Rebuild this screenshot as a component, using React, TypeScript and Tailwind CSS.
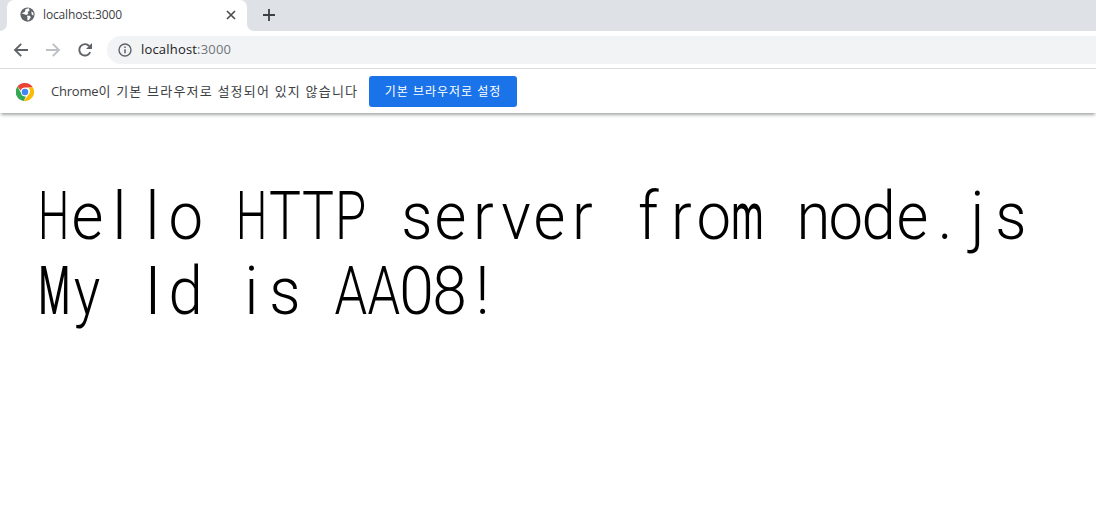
import React from "react";

const ui = "font-['Open_Sans','Noto_Sans_CJK_KR',sans-serif]";

function Globe() {
  return (
    <svg width="15" height="15" viewBox="0 0 16 16" aria-hidden="true">
      <circle cx="8" cy="8" r="7.6" fill="#5f6368" />
      <path d="M1.6 6.6 5 5.2 6 2.2 9.6 1.4 10.2 3.6 8 5.6 9 7 7 8.4 4.6 7.6Z M7.4 9.4 10.4 9.4 11.6 11 9.4 14 7.8 14 8 11.4Z M12 4.6 14.2 6 14.4 9 12.6 8.2Z" fill="#ffffff" />
    </svg>
  );
}

function ChromeLogo() {
  return (
    <svg width="18" height="18" viewBox="0 0 48 48" aria-hidden="true">
      <path d="M4 9.5A24 24 0 0 1 24 0a24 24 0 0 1 21 12H24a12 12 0 0 0-11.4 8.2Z" fill="#ea4335" />
      <path d="M4 9.5 14 27a12 12 0 0 0 12.5 8.8L20.5 47.7A24 24 0 0 1 4 9.5Z" fill="#34a853" />
      <path d="M45 12a24 24 0 0 1-24.5 35.7L34.4 30A12 12 0 0 0 32.5 12Z" fill="#fbbc04" />
      <circle cx="24" cy="24" r="11" fill="#ffffff" />
      <circle cx="24" cy="24" r="8.6" fill="#4285f4" />
    </svg>
  );
}

function Back({ color }: { color: string }) {
  return (
    <svg width="16" height="16" viewBox="0 0 16 16" fill="none" stroke={color} strokeWidth="1.9" aria-hidden="true">
      <path d="M15 8H2M8.2 1.8 2 8l6.2 6.2" />
    </svg>
  );
}

function Forward({ color }: { color: string }) {
  return (
    <svg width="16" height="16" viewBox="0 0 16 16" fill="none" stroke={color} strokeWidth="1.9" aria-hidden="true">
      <path d="M1 8h13M7.8 1.8 14 8l-6.2 6.2" />
    </svg>
  );
}

function Reload() {
  return (
    <svg width="16" height="16" viewBox="0 0 16 16" fill="none" aria-hidden="true">
      <path d="M13.2 10.2A5.7 5.7 0 1 1 12.2 4" stroke="#5f6368" strokeWidth="1.9" />
      <path d="M15 1v6H9Z" fill="#5f6368" />
    </svg>
  );
}

function Info() {
  return (
    <svg width="14" height="14" viewBox="0 0 14 14" fill="none" aria-hidden="true">
      <circle cx="7" cy="7" r="6" stroke="#5f6368" strokeWidth="1.4" />
      <path d="M7 6.2v4M7 3.4v1.6" stroke="#5f6368" strokeWidth="1.5" />
    </svg>
  );
}

function Close() {
  return (
    <svg width="10" height="10" viewBox="0 0 10 10" fill="none" stroke="#4a4d51" strokeWidth="1.7" aria-hidden="true">
      <path d="M1 1l8 8M9 1 1 9" />
    </svg>
  );
}

function Plus() {
  return (
    <svg width="12" height="12" viewBox="0 0 12 12" fill="none" stroke="#3c4043" strokeWidth="1.8" aria-hidden="true">
      <path d="M6 0v12M0 6h12" />
    </svg>
  );
}

const glyphClass: Record<string, string> = {
  H: "scale-x-[0.66] font-[350]",
  M: "scale-x-[0.55] font-normal",
  T: "scale-x-[0.8] font-light",
  P: "scale-x-[0.76] font-light",
  A: "scale-x-[0.78] font-light",
  I: "font-light",
  "0": "scale-x-[0.93] font-light",
  "8": "scale-x-[0.93] font-light",
  y: "scale-x-[0.83] font-light",
  m: "scale-x-[0.55] font-normal",
};

function MonoLine({ text }: { text: string }) {
  return (
    <div className="flex h-[75px]">
      {text.split("").map((c, i) => (
        <span key={i} className="flex w-[33px] shrink-0 justify-center whitespace-pre">
          <span className={`inline-block ${glyphClass[c] ?? "scale-x-[0.92] font-light"}`}>{c}</span>
        </span>
      ))}
    </div>
  );
}

export default function App() {
  return (
    <div className={`flex h-[508px] w-[1096px] flex-col overflow-hidden bg-white ${ui}`}>
      <div className="flex h-[31px] shrink-0 bg-white">
        <div className="w-[7px] rounded-br-[7px] bg-[#dee1e6]" />
        <div className="w-[240px] bg-[#dee1e6]">
          <div className="flex h-full items-center rounded-t-[7px] bg-white pb-[2px] pl-[13px] pr-[11px]">
            <Globe />
            <span className="ml-[8px] flex-1 text-[12px] tracking-[-0.14px] text-[#3c4043]">localhost:3000</span>
            <Close />
          </div>
        </div>
        <div className="flex flex-1 items-center rounded-bl-[7px] bg-[#dee1e6] pb-[2px] pl-[16px]">
          <Plus />
        </div>
      </div>
      <div className="flex h-[37px] shrink-0 items-center bg-white pl-[13px]">
        <Back color="#5f6368" />
        <div className="ml-[16px]"><Forward color="#bdc1c6" /></div>
        <div className="ml-[16px]"><Reload /></div>
        <div className="ml-[14px] flex h-[28px] flex-1 items-center rounded-l-full bg-[#f1f3f4] pl-[11px]">
          <Info />
          <span className="ml-[9px] text-[13px] tracking-[0.18px] text-[#202124]">
            localhost<span className="text-[#70757a]">:3000</span>
          </span>
        </div>
      </div>
      <div className="flex h-[45px] shrink-0 items-center border-t border-[#dadce0] bg-white pl-[16px] pt-[1px] shadow-[0_3px_3px_-1px_rgba(60,64,67,0.45)]">
        <ChromeLogo />
        <span className="ml-[17px] w-[318px] text-[13px] text-[#3c4043]">
          <span className="tracking-[-0.2px]">Chrome</span>
          <span className="tracking-[1.2px]">이 기본 브라우저로 설정되어 있지 않습니다</span>
        </span>
        <button className="flex h-[31px] w-[148px] items-center justify-center rounded-[3px] bg-[#1a73e8] text-[12px] tracking-[1px] text-white">
          기본 브라우저로 설정
        </button>
      </div>
      <div className="whitespace-nowrap pl-[37.5px] pt-[66px] font-['Roboto',sans-serif] text-[67px] leading-[75px] text-black">
        <MonoLine text="Hello HTTP server from node.js" />
        <MonoLine text="My Id is AA08!" />
      </div>
    </div>
  );
}
